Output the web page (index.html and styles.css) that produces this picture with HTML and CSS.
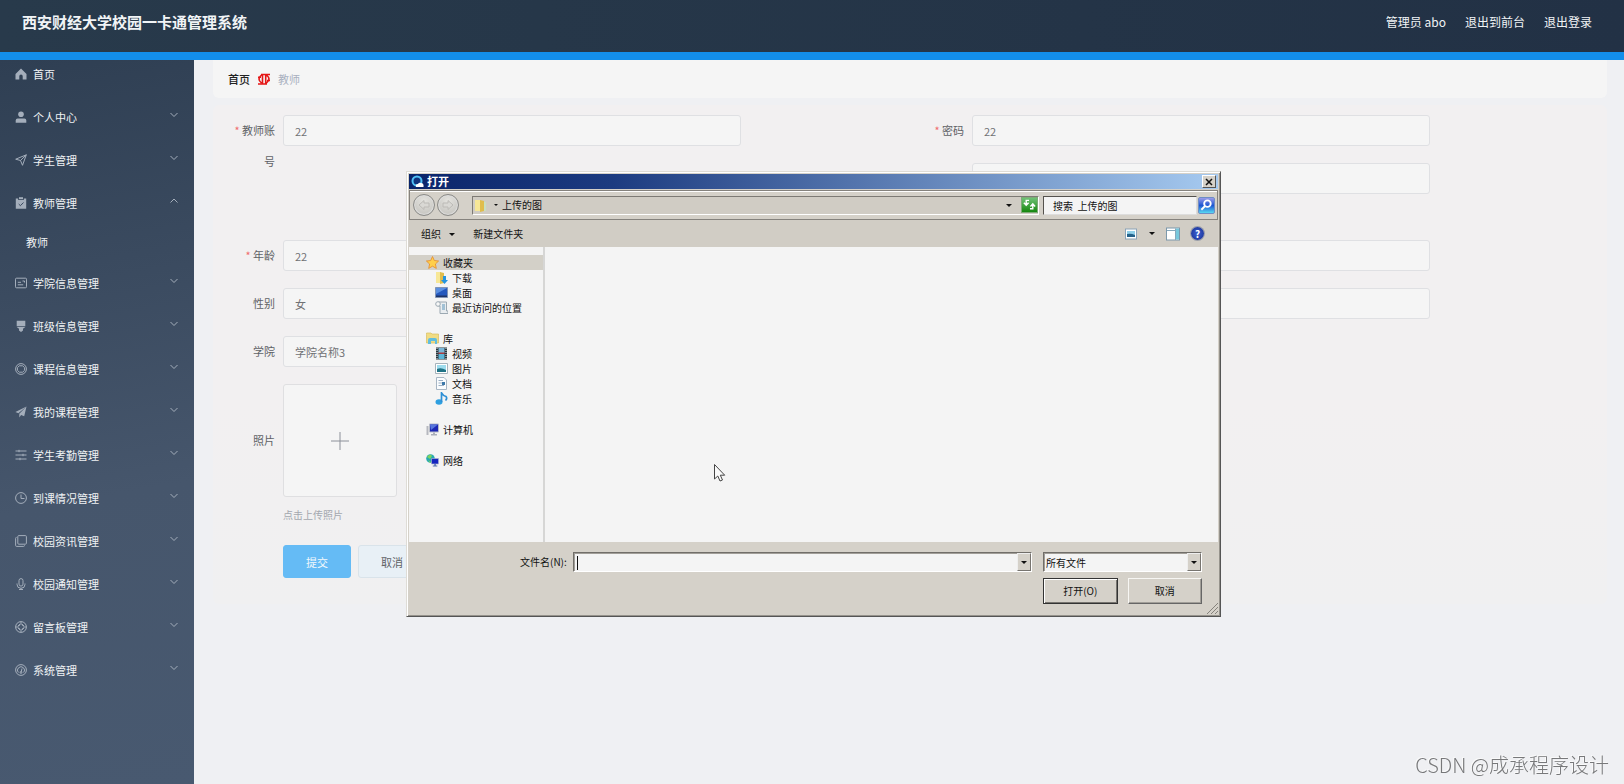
FILE: index.html
```html
<!DOCTYPE html>
<html lang="zh-CN">
<head>
  <meta charset="UTF-8">
  <meta name="viewport" content="width=device-width, initial-scale=1.0">
  <title>西安财经大学校园一卡通管理系统</title>
  <link rel="stylesheet" href="styles.css">
</head>
<body>
  <!-- Header -->
  <header class="header">
    <h1 class="title">西安财经大学校园一卡通管理系统</h1>
    <nav class="user-nav">
      <span>管理员 abo</span>
      <a href="#">退出到前台</a>
      <a href="#">退出登录</a>
    </nav>
  </header>

  <div class="layout">
    <!-- Side menu -->
    <nav class="sidebar">
      <a href="#" class="menu-item home">
        <svg class="icon solid" viewBox="0 0 12 12"><path d="M6 .5 11.5 6v5.5H7.7V8.2a1.7 1.7 0 0 0-3.4 0v3.3H.5V6z"/></svg>
        <span>首页</span>
      </a>
      <a href="#" class="menu-item">
        <svg class="icon solid" viewBox="0 0 12 12"><circle cx="6" cy="3.2" r="2.8"/><path d="M.7 11.7V9.5q0-2 2-2h6.600q2 0 2 2v2.200z"/></svg>
        <span>个人中心</span>
        <svg class="arrow" viewBox="0 0 8 8"><path d="M.5 2 4 5.500 7.500 2"/></svg>
      </a>
      <a href="#" class="menu-item">
        <svg class="icon" viewBox="0 0 12 12"><path d="M.7 5.200 11.300.8 7.500 11.300 5.500 6.500zM5.500 6.500 11.300.8"/></svg>
        <span>学生管理</span>
        <svg class="arrow" viewBox="0 0 8 8"><path d="M.5 2 4 5.500 7.500 2"/></svg>
      </a>
      <a href="#" class="menu-item">
        <svg class="icon solid" viewBox="0 0 12 12"><path d="M.8 1.500h2.400V3h5.600V1.500h2.400v10.300H.8z"/><path d="M4 .2h4v2H4z"/><path class="mark" d="M3.700 7 5.400 8.700 8.500 5.500"/></svg>
        <span>教师管理</span>
        <svg class="arrow" viewBox="0 0 8 8"><path d="M.5 5.500 4 2l3.500 3.500"/></svg>
      </a>
      <a href="#" class="menu-sub">教师</a>
      <a href="#" class="menu-item">
        <svg class="icon" viewBox="0 0 12 12"><rect x=".5" y="1.200" width="11" height="9.600" rx="1"/><path d="M2.800 5.300h3.200M2.800 7.800h5.400M7.500 4h2v1.500"/></svg>
        <span>学院信息管理</span>
        <svg class="arrow" viewBox="0 0 8 8"><path d="M.5 2 4 5.500 7.500 2"/></svg>
      </a>
      <a href="#" class="menu-item">
        <svg class="icon solid" viewBox="0 0 12 12"><path d="M1.700.7h8.600v5.600H1.700zM1.700 7h8.600L8 8.800v1.600L6 12l-2-1.600V8.800z"/></svg>
        <span>班级信息管理</span>
        <svg class="arrow" viewBox="0 0 8 8"><path d="M.5 2 4 5.500 7.500 2"/></svg>
      </a>
      <a href="#" class="menu-item">
        <svg class="icon" viewBox="0 0 12 12"><circle cx="6" cy="6" r="5.400"/><path d="M4.300 2.800h3.400l1.900 1.900v2.600L7.700 9.200H4.300L2.400 7.300V4.700z"/></svg>
        <span>课程信息管理</span>
        <svg class="arrow" viewBox="0 0 8 8"><path d="M.5 2 4 5.500 7.500 2"/></svg>
      </a>
      <a href="#" class="menu-item">
        <svg class="icon solid" viewBox="0 0 12 12"><path d="M11.500.5.4 6l3 1.300zM11.500.5 4.300 7.800v3.700l1.800-2.600 3.100 1.400z"/></svg>
        <span>我的课程管理</span>
        <svg class="arrow" viewBox="0 0 8 8"><path d="M.5 2 4 5.500 7.500 2"/></svg>
      </a>
      <a href="#" class="menu-item">
        <svg class="icon" viewBox="0 0 12 12"><path d="M.5 2h11M.5 6h11M.5 10h11M4 .8v2.400M8 4.800v2.400M5 8.800v2.400"/></svg>
        <span>学生考勤管理</span>
        <svg class="arrow" viewBox="0 0 8 8"><path d="M.5 2 4 5.500 7.500 2"/></svg>
      </a>
      <a href="#" class="menu-item">
        <svg class="icon" viewBox="0 0 12 12"><circle cx="6" cy="6" r="5.400"/><path d="M6 2.500v4h3.500"/></svg>
        <span>到课情况管理</span>
        <svg class="arrow" viewBox="0 0 8 8"><path d="M.5 2 4 5.500 7.500 2"/></svg>
      </a>
      <a href="#" class="menu-item">
        <svg class="icon" viewBox="0 0 12 12"><rect x="2.800" y=".6" width="8.600" height="8.600" rx="1"/><path d="M1.500 2.400Q.6 2.400.6 3.400v7q0 1 1 1h7q.9 0 .9-1"/></svg>
        <span>校园资讯管理</span>
        <svg class="arrow" viewBox="0 0 8 8"><path d="M.5 2 4 5.500 7.500 2"/></svg>
      </a>
      <a href="#" class="menu-item">
        <svg class="icon" viewBox="0 0 12 12"><rect x="4" y=".6" width="4" height="7.500" rx="2"/><path d="M2 5.500v.8a4 4 0 0 0 8 0v-.8M6 10.300v1.200M4 11.500h4"/></svg>
        <span>校园通知管理</span>
        <svg class="arrow" viewBox="0 0 8 8"><path d="M.5 2 4 5.500 7.500 2"/></svg>
      </a>
      <a href="#" class="menu-item">
        <svg class="icon" viewBox="0 0 12 12"><circle cx="6" cy="6" r="5.400"/><path d="M6 .6v3.400M6 8v3.400M.6 6H4M8 6h3.400M4.500 3v1.500H3M7.500 3v1.500H9M4.500 9V7.500H3M7.500 9V7.500H9"/></svg>
        <span>留言板管理</span>
        <svg class="arrow" viewBox="0 0 8 8"><path d="M.5 2 4 5.500 7.500 2"/></svg>
      </a>
      <a href="#" class="menu-item">
        <svg class="icon" viewBox="0 0 12 12"><circle cx="6" cy="6" r="5.400"/><path d="M3.300 8.500A3.500 3.500 0 1 1 8.700 8.500M6 8.500 7 4.500"/><circle cx="6" cy="8.500" r=".9"/></svg>
        <span>系统管理</span>
        <svg class="arrow" viewBox="0 0 8 8"><path d="M.5 2 4 5.500 7.500 2"/></svg>
      </a>
    </nav>

    <!-- Content -->
    <main class="main">
      <div class="breadcrumb">
        <a href="#">首页</a>
        <svg class="separator" viewBox="0 0 14 12"><path d="M4.500 2Q-.5 6 4.500 10M9.500 2q5 4 0 8M5.500 1v10M8.700 1v10M4 1.500h9M1 4.200h3M10 7.500h3M1 11h9"/></svg>
        <span>教师</span>
      </div>

      <form class="form-card">
        <div class="form-grid">
          <div class="field account">
            <label for="account"><i>*</i> 教师账号</label>
            <input id="account" type="text" value="22">
          </div>
          <div class="field">
            <label for="password"><i>*</i> 密码</label>
            <input id="password" type="text" value="22">
          </div>
          <div class="field tall">
            <input type="text" aria-label="教师姓名">
          </div>
          <div class="field">
            <label for="age"><i>*</i> 年龄</label>
            <input id="age" type="text" value="22">
          </div>
          <div class="field">
            <input type="text" aria-label="电话">
          </div>
          <div class="field">
            <label for="sex">性别</label>
            <select id="sex"><option>女</option></select>
          </div>
          <div class="field">
            <input type="text" aria-label="邮箱">
          </div>
          <div class="field">
            <label for="college">学院</label>
            <select id="college"><option>学院名称3</option></select>
          </div>
          <div class="field photo">
            <label for="upload">照片</label>
            <div>
              <button type="button" id="upload" class="upload" aria-label="上传照片">
                <svg viewBox="0 0 18 18"><path d="M9 0v18M0 9h18"/></svg>
              </button>
              <p class="tip">点击上传照片</p>
            </div>
          </div>
        </div>
        <div class="form-buttons">
          <button type="submit" class="btn primary">提交</button>
          <button type="button" class="btn">取消</button>
        </div>
      </form>
    </main>
  </div>

  <!-- File picker -->
  <section class="dialog" role="dialog" aria-labelledby="dialog-title">
    <div class="title-bar">
      <svg class="logo" viewBox="0 0 13 13"><circle cx="6" cy="6" r="4.500" fill="#10337c" stroke="#4fc0f5" stroke-width="2"/><path d="M5 12q-1-3 2-3 1-2 3-1 3 0 2.500 4z" fill="#fff"/></svg>
      <h2 id="dialog-title">打开</h2>
      <button type="button" class="close" aria-label="关闭">
        <svg viewBox="0 0 8 8"><path d="m1 1 6 6M7 1 1 7"/></svg>
      </button>
    </div>

    <div class="nav-bar">
      <div class="history">
        <button type="button" class="round" aria-label="后退"><svg viewBox="0 0 12 12"><path d="M1 6 6 1.500V4h5v4H6v2.500z"/></svg></button>
        <button type="button" class="round" aria-label="前进"><svg viewBox="0 0 12 12"><path d="M11 6 6 1.500V4H1v4h5v2.500z"/></svg></button>
      </div>
      <div class="address">
        <svg class="file-icon" viewBox="0 0 13 13"><path d="M1 1h5v11H1z" fill="#f7e796"/><path d="m6 1 4 1v10l-4 1z" fill="#e0bd4d"/><path d="M10 3h2v9h-2z" fill="#c9dfc0"/></svg>
        <span class="caret small"></span>
        <span>上传的图</span>
        <span class="caret last"></span>
        <button type="button" class="refresh" aria-label="刷新">
          <svg viewBox="0 0 16 14"><path d="M7.500 2.500H4.500V7M2 5l2.500 2.800L7 5M8.500 11.500h3V7M9 9l2.500-2.800L14 9"/></svg>
        </button>
      </div>
      <input type="text" class="search" aria-label="搜索" value="搜索 &nbsp;上传的图">
      <button type="button" class="search-btn" aria-label="搜索">
        <svg viewBox="0 0 16 16"><circle cx="9" cy="6" r="3.500"/><path d="m6.500 8.500-4 4"/></svg>
      </button>
    </div>

    <div class="tool-bar">
      <button type="button">组织 <span class="caret"></span></button>
      <button type="button">新建文件夹</button>
      <div class="views">
        <button type="button" aria-label="视图"><svg class="view-icon" viewBox="0 0 14 14"><rect x="1.500" y="2" width="11" height="10" fill="#fff" stroke="#8ba4b8"/><path d="M3 4h8v6H3z" fill="#8fd0ea"/><path d="M3 7q4-1 8 1v2H3z" fill="#24628a"/></svg></button>
        <button type="button" class="more" aria-label="更多视图"><span class="caret"></span></button>
        <button type="button" aria-label="预览窗格"><svg class="view-icon" viewBox="0 0 14 14"><rect x=".5" y="1" width="13" height="12" fill="#fff" stroke="#7c98ab"/><path d="M9.500 1.500h3.500v11H9.500z" fill="#78c8dc"/><path d="M1 3.500h8.500v-2M9.500 2v11" fill="none" stroke="#86a9bd"/></svg></button>
        <button type="button" class="help" aria-label="帮助">?</button>
      </div>
    </div>

    <div class="browser">
      <div class="tree">
        <ul>
          <li class="group selected">
            <svg class="file-icon" viewBox="0 0 13 13"><path d="m6.500.5 1.800 4 4.300.5-3.200 3 .9 4.400-3.800-2.200-3.800 2.200.9-4.400L.4 5l4.300-.5z" fill="#ffcf4b" stroke="#e58a2c" stroke-width=".8"/></svg>收藏夹
          </li>
          <li>
            <svg class="file-icon" viewBox="0 0 13 13"><path d="M1 1h5v11H1z" fill="#f7e796"/><path d="m5 1 4 1v10l-4 1z" fill="#e0bd4d"/><path d="M8 5h3v4h2l-3.500 4L6 9h2z" fill="#2494df"/></svg>下载
          </li>
          <li>
            <svg class="file-icon" viewBox="0 0 13 13"><path d="M.5 1.500h12v10H.5z" fill="#2458bd" stroke="#8295b4"/><path d="M1 2h11L1 8z" fill="#5b8fe0"/><path d="M1 9.500h11V11H1z" fill="#1e3466"/></svg>桌面
          </li>
          <li>
            <svg class="file-icon" viewBox="0 0 13 13"><path d="M3.500 1h8v9H13v2.500H5V5H3.500z" fill="#e9edf0" stroke="#9ca9b2"/><circle cx="3" cy="3" r="2.300" fill="#f7f7f7" stroke="#9ca9b2"/><path d="M7 4h3M7 6h3M7 8h3" stroke="#5b94b9"/></svg>最近访问的位置
          </li>
        </ul>
        <ul>
          <li class="group">
            <svg class="file-icon" viewBox="0 0 13 13"><path d="M.5 2.500V1H5l1 1h6.500v9H.5z" fill="#f1dc83" stroke="#d7bd60" stroke-width=".7"/><path d="M2 12V8q0-2 2-2h5q2 0 2 2v4H9V9H5v3z" fill="#61bdde"/></svg>库
          </li>
          <li>
            <svg class="file-icon" viewBox="0 0 13 13"><path d="M1 .5h11v12H1z" fill="#27343c"/><path d="M3.500 1h6v5h-6z" fill="#7ab6d8"/><path d="M3.500 7h6v5h-6z" fill="#5db5d7"/><path d="M3.500 5.500h6v1.500h-6z" fill="#a83b3e"/><path d="M2 1v11M11 1v11" stroke="#dfe5e8" stroke-dasharray="1 1"/></svg>视频
          </li>
          <li>
            <svg class="file-icon" viewBox="0 0 13 13"><path d="M.5 1.500h12v10H.5z" fill="#fff" stroke="#a6b3bb"/><path d="M2 3h9v7H2z" fill="#9edced"/><path d="M2 7q4-2 9 1v2H2z" fill="#1f7386"/></svg>图片
          </li>
          <li>
            <svg class="file-icon" viewBox="0 0 13 13"><path d="M1.500.5H9l2.500 2.500v9.500h-10z" fill="#fafcfe" stroke="#a8b6c4"/><path d="M3.500 3.500H8M3.500 6H7M3.500 8.500H9" stroke="#9aafc4"/><path d="M7 5h3v3H7z" fill="#3c78a9"/></svg>文档
          </li>
          <li>
            <svg class="file-icon" viewBox="0 0 13 13"><ellipse cx="4" cy="10" rx="3.500" ry="2.800" fill="#2e9fe0"/><path d="M6.500 10V.8Q8 3.500 11 4.500q1.500 2-.5 4" fill="none" stroke="#2e8fd5" stroke-width="1.700"/></svg>音乐
          </li>
        </ul>
        <ul>
          <li class="group">
            <svg class="file-icon" viewBox="0 0 13 13"><path d="M.5 3h2v9h-2z" fill="#b6b8bf"/><path d="M3.500 1h9v8h-9z" fill="#1c27b3" stroke="#b7bbc8"/><path d="M4 1.500h8L5 7z" fill="#5776dd"/><path d="M7 9.500h2V11h2v1.500H5V11h2z" fill="#aaaeb9"/></svg>计算机
          </li>
        </ul>
        <ul>
          <li class="group">
            <svg class="file-icon" viewBox="0 0 13 13"><circle cx="4.500" cy="4.500" r="4.300" fill="#27a8b1"/><path d="M1 3q3-4 5-1L4 5zM2 6l3 2-1 1z" fill="#7ed45d"/><path d="M5.500 4.500h7V10h-7z" fill="#1625c0" stroke="#aab2cf" stroke-width=".7"/><path d="M8.300 10h1.500v1.500h1.500v1H6.800v-1h1.500z" fill="#5670ad"/></svg>网络
          </li>
        </ul>
      </div>
      <div class="files"></div>
    </div>

    <div class="dialog-footer">
      <label for="filename">文件名(N):</label>
      <div class="combo">
        <input id="filename" type="text">
        <i class="text-caret"></i>
        <button type="button" aria-label="展开"><span class="caret"></span></button>
      </div>
      <div class="type-col">
        <div class="combo">
          <select aria-label="文件类型"><option>所有文件</option></select>
          <button type="button" aria-label="展开"><span class="caret"></span></button>
        </div>
        <div class="actions">
          <button type="button" class="win-btn default">打开(O)</button>
          <button type="button" class="win-btn">取消</button>
        </div>
      </div>
    </div>
    <svg class="grip" viewBox="0 0 11 11"><path d="M0 11 11 0M4 11l7-7M8 11l3-3"/></svg>
    <svg class="pointer" viewBox="0 0 12 18"><path d="M.5.500v14.500l3.300-3 2.200 5 2.500-1-2.200-4.800h4.400z"/></svg>
  </section>

  <div class="watermark">CSDN @成承程序设计</div>
</body>
</html>
```

FILE: styles.css
```css
:root {
  --blue: #138eea;
  --win: #d5d1c9;
  --paper: #f4f4f4;
}

* {
  box-sizing: border-box;
}

body {
  margin: 0;
  min-height: 100vh;
  display: flex;
  flex-direction: column;
  font-family: "Noto Sans CJK SC", sans-serif;
  font-size: 11px;
  color: #606266;
  background: #eff0f3;
}

a {
  color: inherit;
  text-decoration: none;
}

button, input, select {
  font: inherit;
  color: inherit;
  margin: 0;
  padding: 0;
}

select {
  appearance: none;
}

h1, h2, p, ul {
  margin: 0;
  padding: 0;
}

i {
  font-style: normal;
}

/* Header */
.header {
  display: flex;
  justify-content: space-between;
  height: 60px;
  padding: 0 32px 8px 22px;
  border-bottom: 8px solid var(--blue);
  background: linear-gradient(90deg, #283a4b, #223145);
  color: #f1f4f6;
  line-height: 44px;
}

.title {
  font-size: 15px;
  font-weight: 700;
}

.user-nav {
  display: flex;
  gap: 19px;
  font-size: 12px;
}

.layout {
  flex: 1;
  display: flex;
}

/* Side menu */
.sidebar {
  width: 194px;
  flex-shrink: 0;
  background: linear-gradient(170deg, #2f3f53, #46566c 60%, #485970);
  color: #eff2f4;
}

.menu-item {
  display: flex;
  align-items: center;
  height: 43px;
  padding: 0 16px 0 15px;
}

.menu-item.home {
  height: 35px;
  padding-bottom: 7px;
}

.menu-sub {
  display: block;
  padding-left: 26px;
  line-height: 37px;
}

.icon {
  width: 12px;
  height: 12px;
  margin-right: 6px;
  fill: none;
  stroke: #a4aebb;
}

.icon.solid {
  fill: #a4aebb;
  stroke: none;
}

.icon .mark {
  fill: none;
  stroke: #3a4a60;
}

.arrow {
  width: 8px;
  height: 8px;
  margin: 0 0 4px auto;
  fill: none;
  stroke: #a4aebb;
}

/* Content */
.main {
  flex: 1;
  padding: 0 17px 0 19px;
}

.breadcrumb {
  display: flex;
  align-items: center;
  gap: 7px;
  height: 38px;
  padding: 0 15px;
  border-radius: 0 0 6px 6px;
  background: #f5f5f5;
  color: #a9b0bf;
}

.breadcrumb a {
  color: #222;
  font-weight: 500;
}

.separator {
  width: 14px;
  height: 12px;
  fill: none;
  stroke: #e51616;
  stroke-width: 1.600;
}

.form-card {
  margin-top: 7px;
  padding: 10px 8px 26px;
  border-radius: 6px;
  background: linear-gradient(#f2f0f1 60%, #f0f0f1);
}

.form-grid {
  display: grid;
  grid-template-columns: 1fr 1fr;
  row-gap: 17px;
}

.field {
  display: grid;
  grid-template-columns: 62px 73fr 27fr;
  align-items: start;
}

.field.account {
  grid-row: span 2;
}

.field.tall {
  min-height: 60px;
}

.field label {
  padding: 0 8px;
  line-height: 31px;
  text-align: right;
}

.field label i {
  color: #f06c6c;
}

.field input,
.field select {
  grid-column: 2;
  width: 100%;
  height: 31px;
  padding: 0 11px;
  border: 1px solid #dfe0e3;
  border-radius: 3px;
  background: #f5f5f5;
  color: #707174;
}

.field.photo {
  grid-column: 1;
}

.field.photo label {
  line-height: 113px;
}

.upload {
  display: flex;
  align-items: center;
  justify-content: center;
  width: 114px;
  height: 113px;
  border: 1px solid #dfdfe1;
  border-radius: 3px;
  background: #f5f5f5;
}

.upload svg {
  width: 18px;
  height: 18px;
  stroke: #8c9099;
}

.tip {
  margin-top: 8px;
  font-size: 10px;
  line-height: 20px;
  color: #a3a7ae;
}

.form-buttons {
  display: flex;
  gap: 7px;
  margin-top: 20px;
  padding-left: 62px;
}

.btn {
  width: 68px;
  height: 33px;
  border: 1px solid #d9e3ea;
  border-radius: 3px;
  background: #e8f0f6;
}

.btn.primary {
  border-color: #65bbf5;
  background: #65bbf5;
  color: #f4f9fc;
}

/* File picker window */
.dialog {
  position: absolute;
  top: 171px;
  left: 406px;
  width: 815px;
  padding: 2px;
  border: 1px solid;
  border-color: #dedcd6 #555 #555 #dedcd6;
  box-shadow: inset 1px 1px #fff, inset -1px -1px #96938c;
  background: var(--win);
  color: #111;
  font-size: 10px;
}

.dialog button {
  border: 0;
  background: none;
}

.title-bar {
  display: flex;
  align-items: center;
  gap: 3px;
  height: 15px;
  padding: 0 2px;
  background: linear-gradient(90deg, #0a246a, #1c3b80 25%, #a6caf0);
  color: #fff;
}

.title-bar h2 {
  font-size: 11px;
  line-height: 15px;
}

.logo {
  width: 13px;
  height: 13px;
}

.dialog .close {
  display: flex;
  align-items: center;
  justify-content: center;
  width: 14px;
  height: 13px;
  margin-left: auto;
  border: 1px solid;
  border-color: #fff #555 #555 #fff;
  background: var(--win);
}

.close svg {
  width: 8px;
  height: 8px;
  stroke: #111;
  stroke-width: 1.500;
}

.nav-bar {
  display: flex;
  align-items: center;
  height: 30px;
  margin-top: 1px;
  padding: 0 2px 0 3px;
  border: 1px solid #85827d;
  box-shadow: inset 0 1px #fff, 0 1px #fff;
}

.history {
  display: flex;
  gap: 2px;
}

.dialog .round {
  display: flex;
  align-items: center;
  justify-content: center;
  width: 22px;
  height: 22px;
  border: 1px solid #8b8b88;
  border-radius: 50%;
  background: radial-gradient(circle at 50% 30%, #e4e3df, #bfbeb9);
  box-shadow: inset 0 0 1px 1px #dedede;
}

.round svg {
  width: 12px;
  height: 12px;
  fill: #d9d8d4;
  stroke: #bcbab6;
}

.address {
  flex: 1;
  display: flex;
  align-items: center;
  gap: 4px;
  height: 19px;
  margin: 0 4px 0 13px;
  padding-left: 1px;
  border: 1px solid;
  border-color: #7d7a75 #fff #fff #7d7a75;
  background: #d0ccc4;
  line-height: 16px;
}

.file-icon {
  width: 13px;
  height: 13px;
  flex-shrink: 0;
}

.caret {
  display: inline-block;
  border: 3px solid transparent;
  border-top-color: #111;
  border-bottom: 0;
}

.caret.small {
  margin-left: 3px;
  border-width: 2px;
  border-bottom: 0;
}

.address .caret.last {
  margin-left: auto;
}

.dialog .refresh {
  width: 17px;
  height: 16px;
  margin-left: 5px;
  border: 1px solid #7eab76;
  background: linear-gradient(#6fc276, #16870f);
}

.refresh svg {
  display: block;
  fill: none;
  stroke: #fff;
  stroke-width: 1.500;
}

.search {
  width: 154px;
  height: 19px;
  padding-left: 9px;
  border: 1px solid;
  border-color: #55524e #ddd #ddd #55524e;
  background: var(--paper);
}

.dialog .search-btn {
  width: 17px;
  height: 17px;
  margin-left: 1px;
  border: 1px solid #6f8dc4;
  border-radius: 2px;
  background: linear-gradient(#9b9be9, #1c56d2 50%, #58d9f2);
}

.search-btn svg {
  display: block;
  fill: none;
  stroke: #fff;
  stroke-width: 2;
}

.tool-bar {
  display: flex;
  align-items: center;
  gap: 18px;
  height: 27px;
  padding: 0 14px 0 12px;
  background: #d1cdc5;
  line-height: 20px;
}

.tool-bar .caret {
  margin: 0 0 2px 6px;
}

.views {
  display: flex;
  align-items: center;
  gap: 11px;
  margin-left: auto;
}

.views .more {
  display: flex;
}

.views .caret {
  margin: 0;
}

.view-icon {
  display: block;
  width: 14px;
  height: 14px;
}

.tool-bar .help {
  width: 13px;
  height: 13px;
  border-radius: 50%;
  background: radial-gradient(#3d62d4, #142a8c);
  box-shadow: 0 0 0 1px #9a9ea9;
  color: #fff;
  font-weight: 700;
  line-height: 13px;
}

.browser {
  display: flex;
  height: 295px;
  background: var(--paper);
}

.tree {
  width: 136px;
  padding-top: 8px;
  border-right: 2px solid #d6d6d5;
}

.tree ul {
  margin-bottom: 16px;
  list-style: none;
}

.tree li {
  display: flex;
  align-items: center;
  gap: 4px;
  height: 15px;
  padding-left: 26px;
  line-height: 15px;
}

.tree .group {
  padding-left: 17px;
}

.tree .selected {
  background: #d3d0c8;
}

.files {
  flex: 1;
}

/* File name, type and actions */
.dialog-footer {
  display: flex;
  align-items: flex-start;
  padding: 10px 16px 10px 111px;
  line-height: 20px;
}

.dialog-footer label {
  margin-right: 6px;
}

.combo {
  position: relative;
  flex: 1;
  display: flex;
  height: 20px;
  border: 1px solid;
  border-color: #716e69 #fff #fff #716e69;
  box-shadow: inset 1px 1px #a19e98;
  background: var(--paper);
}

.combo input,
.combo select {
  flex: 1;
  min-width: 0;
  padding-left: 2px;
  border: 0;
  background: none;
}

.combo button {
  display: flex;
  align-items: center;
  justify-content: center;
  width: 14px;
  border: 1px solid;
  border-color: #eee #77746f #77746f #eee;
  background: var(--win);
}

.text-caret {
  position: absolute;
  top: 3px;
  left: 3px;
  width: 1px;
  height: 14px;
  background: #111;
}

.type-col {
  width: 159px;
  margin-left: 11px;
}

.actions {
  display: flex;
  gap: 10px;
  margin-top: 6px;
}

.dialog .win-btn {
  flex: 1;
  height: 26px;
  border: 1px solid;
  border-color: #f7f6f3 #666 #666 #f7f6f3;
  box-shadow: inset -1px -1px #a19e98;
}

.dialog .default {
  border-color: #333;
  box-shadow: inset 1px 1px #fff, inset -1px -1px #77746f;
}

.grip {
  position: absolute;
  right: 2px;
  bottom: 2px;
  width: 11px;
  height: 11px;
  stroke: #85827c;
}

.pointer {
  position: absolute;
  top: 292px;
  left: 307px;
  width: 12px;
  height: 18px;
  fill: #fafafa;
  stroke: #444;
}

.watermark {
  position: fixed;
  right: 15px;
  bottom: 5px;
  font-size: 20px;
  font-weight: 300;
  color: #77787a;
  text-shadow: -1px -1px #fafafa;
}
```
